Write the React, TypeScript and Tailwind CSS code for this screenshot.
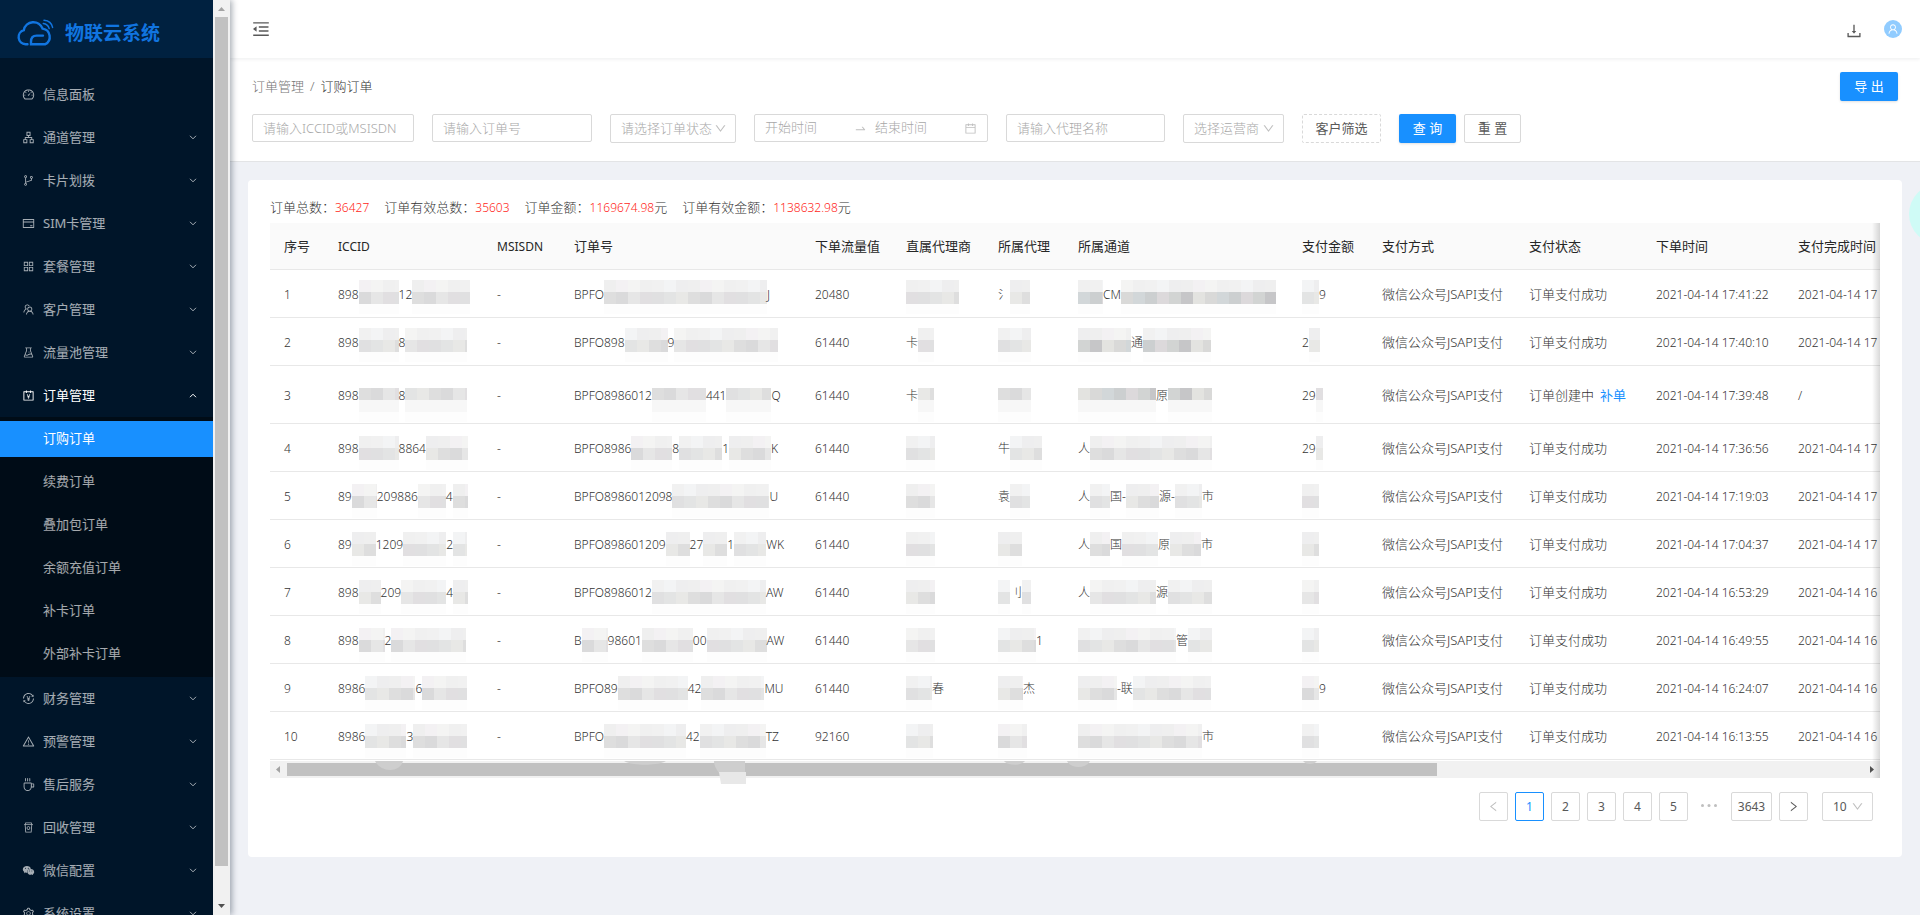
import type { ReactNode } from "react";
import type { IconType } from "react-icons";
import {
  AiFillWechat,
  AiOutlineAccountBook,
  AiOutlineApartment,
  AiOutlineAppstore,
  AiOutlineBranches,
  AiOutlineCalendar,
  AiOutlineCoffee,
  AiOutlineCreditCard,
  AiOutlineDashboard,
  AiOutlineDown,
  AiOutlineDownload,
  AiOutlineExperiment,
  AiOutlineLeft,
  AiOutlineMenuFold,
  AiOutlineRest,
  AiOutlineRight,
  AiOutlineSetting,
  AiOutlineSwapRight,
  AiOutlineTeam,
  AiOutlineTransaction,
  AiOutlineUser,
  AiOutlineWarning,
} from "react-icons/ai";

type MenuEntry = { label: string; icon: IconType; leaf?: boolean; open?: boolean };

const topMenu: MenuEntry[] = [
  { label: "信息面板", icon: AiOutlineDashboard, leaf: true },
  { label: "通道管理", icon: AiOutlineApartment },
  { label: "卡片划拨", icon: AiOutlineBranches },
  { label: "SIM卡管理", icon: AiOutlineCreditCard },
  { label: "套餐管理", icon: AiOutlineAppstore },
  { label: "客户管理", icon: AiOutlineTeam },
  { label: "流量池管理", icon: AiOutlineExperiment },
  { label: "订单管理", icon: AiOutlineAccountBook, open: true },
];

const orderMenu = ["订购订单", "续费订单", "叠加包订单", "余额充值订单", "补卡订单", "外部补卡订单"];

const bottomMenu: MenuEntry[] = [
  { label: "财务管理", icon: AiOutlineTransaction },
  { label: "预警管理", icon: AiOutlineWarning },
  { label: "售后服务", icon: AiOutlineCoffee },
  { label: "回收管理", icon: AiOutlineRest },
  { label: "微信配置", icon: AiFillWechat },
  { label: "系统设置", icon: AiOutlineSetting },
];

// A string is readable text; a number is the width of a masked stretch.
type Fragment = string | number;

type Order = {
  iccid: Fragment[];
  no: Fragment[];
  flow: string;
  direct: Fragment[];
  agent: Fragment[];
  channel: Fragment[];
  amount: Fragment[];
  created: string;
  paid: string;
  pending?: boolean;
};

const orders: Order[] = [
  { iccid: ["898", 40, "12", 58], no: ["BPFO", 163, "J"], flow: "20480", direct: [53], agent: ["氵", 20], channel: [25, "CM", 155], amount: [17, "9"], created: "2021-04-14 17:41:22", paid: "2021-04-14 17" },
  { iccid: ["898", 40, "8", 62], no: ["BPFO898", 43, "9", 104], flow: "61440", direct: ["卡", 16], agent: [33], channel: [53, "通", 68], amount: ["2", 11], created: "2021-04-14 17:40:10", paid: "2021-04-14 17" },
  { iccid: ["898", 40, "8", 62], no: ["BPFO8986012", 54, "441", 45, "Q"], flow: "61440", direct: ["卡", 16], agent: [33], channel: [78, "原", 44], amount: ["29", 7], created: "2021-04-14 17:39:48", paid: "/", pending: true },
  { iccid: ["898", 40, "8864", 42], no: ["BPFO8986", 41, "8", 43, "1", 42, "K"], flow: "61440", direct: [29], agent: ["牛", 32], channel: ["人", 122], amount: ["29", 7], created: "2021-04-14 17:36:56", paid: "2021-04-14 17" },
  { iccid: ["89", 25, "209886", 28, "4", 15], no: ["BPFO8986012098", 97, "U"], flow: "61440", direct: [29], agent: ["袁", 20], channel: ["人", 20, "国-", 33, "源-", 27, "市"], amount: [17], created: "2021-04-14 17:19:03", paid: "2021-04-14 17" },
  { iccid: ["89", 24, "1209", 43, "2", 14], no: ["BPFO898601209", 24, "27", 24, "1", 32, "WK"], flow: "61440", direct: [29], agent: [24], channel: ["人", 20, "国", 36, "原", 31, "市"], amount: [17], created: "2021-04-14 17:04:37", paid: "2021-04-14 17" },
  { iccid: ["898", 22, "209", 45, "4", 15], no: ["BPFO8986012", 114, "AW"], flow: "61440", direct: [29], agent: [12, "刂", 9], channel: ["人", 66, "源", 44], amount: [17], created: "2021-04-14 16:53:29", paid: "2021-04-14 16" },
  { iccid: ["898", 26, "2", 75], no: ["B", 26, "98601", 51, "00", 60, "AW"], flow: "61440", direct: [29], agent: [38, "1"], channel: [98, "管", 24], amount: [17], created: "2021-04-14 16:49:55", paid: "2021-04-14 16" },
  { iccid: ["8986", 50, "6", 45], no: ["BPFO89", 70, "42", 63, "MU"], flow: "61440", direct: [26, "春"], agent: [25, "杰"], channel: [39, "-联", 78], amount: [17, "9"], created: "2021-04-14 16:24:07", paid: "2021-04-14 16" },
  { iccid: ["8986", 41, "3", 54], no: ["BPFO", 82, "42", 66, "TZ"], flow: "92160", direct: [27], agent: [29], channel: [124, "市"], amount: [17], created: "2021-04-14 16:13:55", paid: "2021-04-14 16" },
];

const columns = [
  { title: "序号", width: "w-[54px]" },
  { title: "ICCID", width: "w-[159px]" },
  { title: "MSISDN", width: "w-[77px]" },
  { title: "订单号", width: "w-[241px]" },
  { title: "下单流量值", width: "w-[91px]" },
  { title: "直属代理商", width: "w-[92px]" },
  { title: "所属代理", width: "w-[80px]" },
  { title: "所属通道", width: "w-[224px]" },
  { title: "支付金额", width: "w-[80px]" },
  { title: "支付方式", width: "w-[147px]" },
  { title: "支付状态", width: "w-[127px]" },
  { title: "下单时间", width: "w-[142px]" },
  { title: "支付完成时间", width: "w-[142px]" },
];

const darkTones = ["#e0e0e1", "#e6e6e6", "#dedede", "#e3e4e4", "#e1dfe1", "#dadadb", "#e8e8e6"];
const lightTones = ["#f1f1f1", "#f4f4f3", "#efefef", "#f3f4f5", "#f0f0f0", "#f3f1f3", "#eeeeef"];
const strongTones = ["#cccfd0", "#d9d9d8", "#c6c6c8", "#dcd9db", "#d2d7d9", "#e3e3e0", "#d2d4d3"];

function Mosaic({ width, row, strong }: { width: number; row: number; strong?: boolean }) {
  const dy = row < 2 ? -3 : row === 2 ? 4 : -1;
  const flipped = row === 2;
  const count = Math.ceil(width / 12);
  const dark = strong ? strongTones : darkTones;
  return (
    <svg aria-hidden="true" width={width} height={24} className="shrink-0 overflow-visible">
      <g transform={`translate(0 ${dy})`}>
        {Array.from({ length: count }, (_, i) => {
          const w = Math.min(12, width - i * 12);
          const k = (i * 3 + row * 2 + width) % 7;
          return (
            <g key={i}>
              <rect x={i * 12} y={0} width={w} height={12} fill={flipped ? dark[k] : lightTones[k]} />
              <rect x={i * 12} y={12} width={w} height={12} fill={flipped ? "#f7f7f7" : dark[k]} />
            </g>
          );
        })}
        <rect x={0} y={24} width={width} height={10} fill="#fdfdfd" />
      </g>
    </svg>
  );
}

function Masked({ parts, row, strong }: { parts: Fragment[]; row: number; strong?: boolean }) {
  return (
    <div className="flex h-6 items-center whitespace-nowrap">
      {parts.map((part, i) =>
        typeof part === "string" ? <span key={i}>{part}</span> : <Mosaic key={i} width={part} row={row} strong={strong} />,
      )}
    </div>
  );
}

function Chevron({ up }: { up?: boolean }) {
  return (
    <svg aria-hidden="true" viewBox="0 0 8 5" className="h-[5px] w-2" fill="none" stroke="currentColor">
      <path d={up ? "M1 4.2 4 1.2 7 4.2" : "M1 0.8 4 3.8 7 0.8"} />
    </svg>
  );
}

function MenuRow({ entry }: { entry: MenuEntry }) {
  const Icon = entry.icon;
  return (
    <li>
      <a
        href="#"
        className={`flex h-[43px] items-center pl-[22px] pr-4 text-[13px] ${entry.open ? "text-white" : "text-white/65"}`}
      >
        <Icon className="mr-2 size-[13px]" />
        <span className="flex-1">{entry.label}</span>
        {!entry.leaf && <Chevron up={entry.open} />}
      </a>
    </li>
  );
}

function Logo() {
  return (
    <svg aria-hidden="true" viewBox="0 0 37 28" className="h-7 w-[37px]" fill="none" stroke="#1175e0" strokeLinecap="round">
      <path
        strokeWidth="2.4"
        d="M10.500 25.300H8.500A7.200 7.200 0 0 1 6.800 11.200 9.800 9.800 0 0 1 25.600 9.600 8.300 8.300 0 0 1 28 25.300H14V22.700C14 18.400 16.200 16.600 19.600 16.600H26"
      />
      <path strokeWidth="1.5" d="M26.300 4.600C29.400 5 31.400 6.800 32.200 9.600M27 1.200C31.800 1.600 34.800 4.200 35.600 8.400" />
    </svg>
  );
}

function Sidebar() {
  return (
    <aside className="relative z-10 flex w-[230px] shrink-0 overflow-hidden font-normal shadow-[2px_0_6px_rgba(0,21,41,0.35)]">
      <div className="min-w-0 flex-1 bg-[#001529]">
        <a href="#" className="flex h-[58px] items-center bg-[#002140] pt-2 pl-[17px]">
          <Logo />
          <span className="ml-[11px] text-[19px] leading-6 font-bold text-[#1175e0]">物联云系统</span>
        </a>
        <nav className="pt-[15px]">
          <ul>
            {topMenu.map((m) => (
              <MenuRow key={m.label} entry={m} />
            ))}
          </ul>
          <ul className="bg-[#000c17] py-px">
            {orderMenu.map((label, i) => (
              <li key={label} className="pt-[3px] pb-1">
                <a
                  href="#"
                  className={`flex h-9 items-center pl-[43px] text-[13px] ${i === 0 ? "bg-[#1890ff] text-white" : "text-white/65"}`}
                >
                  {label}
                </a>
              </li>
            ))}
          </ul>
          <ul>
            {bottomMenu.map((m) => (
              <MenuRow key={m.label} entry={m} />
            ))}
          </ul>
        </nav>
      </div>
      <div aria-hidden="true" className="flex w-[17px] flex-col items-center bg-[#f1f1f1]">
        <svg viewBox="0 0 17 17" className="size-[17px] shrink-0">
          <path d="M5 11h7L8.500 7z" fill="#a3a3a3" />
        </svg>
        <div className="w-[13px] flex-1 bg-[#c1c1c1]" />
        <div className="h-8 shrink-0" />
        <svg viewBox="0 0 17 17" className="size-[17px] shrink-0">
          <path d="M5 6h7l-3.500 4z" fill="#505050" />
        </svg>
      </div>
    </aside>
  );
}

function TextField({ label, className }: { label: string; className: string }) {
  return (
    <input
      type="text"
      aria-label={label}
      placeholder={label}
      className={`h-7 rounded-[2px] border border-[#d9d9d9] bg-white px-[10px] text-[13px] outline-none placeholder:text-[#a8a8a8] ${className}`}
    />
  );
}

function SelectField({ label, text, className, children }: { label: string; text: string; className: string; children?: ReactNode }) {
  return (
    <div className={`relative flex h-[29px] items-center rounded-[2px] border border-[#d9d9d9] bg-white ${className}`}>
      <select aria-label={label} className="h-full w-full appearance-none bg-transparent pl-[10px] outline-none">
        <option>{text}</option>
        {children}
      </select>
      <AiOutlineDown className="pointer-events-none absolute right-2 size-[13px] text-[#bfbfbf]" />
    </div>
  );
}

function Filters() {
  return (
    <form className="flex items-start gap-[18px]" onSubmit={(e) => e.preventDefault()}>
      <TextField label="请输入ICCID或MSISDN" className="w-[162px]" />
      <TextField label="请输入订单号" className="w-[160px]" />
      <SelectField label="订单状态" text="请选择订单状态" className="w-[126px] text-[13px] text-[#a8a8a8]" />
      <div className="flex h-7 w-[234px] items-center rounded-[2px] border border-[#d9d9d9] px-[10px] text-[13px] text-[#bfbfbf]">
        <input aria-label="开始时间" placeholder="开始时间" className="min-w-0 flex-1 outline-none placeholder:text-[#a8a8a8]" />
        <AiOutlineSwapRight className="mr-2 size-[13px]" />
        <input aria-label="结束时间" placeholder="结束时间" className="min-w-0 flex-1 outline-none placeholder:text-[#a8a8a8]" />
        <AiOutlineCalendar className="size-[13px]" />
      </div>
      <TextField label="请输入代理名称" className="w-[159px]" />
      <SelectField label="运营商" text="选择运营商" className="w-[101px] text-[13px] text-[#a8a8a8]" />
      <button type="button" className="h-[29px] w-[79px] rounded-[2px] border border-dashed border-[#d9d9d9] bg-white text-[13px] font-normal text-[#595959]">
        客户筛选
      </button>
      <div className="flex gap-2">
        <button type="submit" className="h-[29px] w-[57px] rounded-[2px] bg-[#1890ff] text-[13px] font-normal text-white shadow-sm">
          查 询
        </button>
        <button type="reset" className="h-[29px] w-[57px] rounded-[2px] border border-[#d9d9d9] bg-white text-[13px] font-normal text-[#595959]">
          重 置
        </button>
      </div>
    </form>
  );
}

const stats = [
  { label: "订单总数：", value: "36427", unit: "" },
  { label: "订单有效总数：", value: "35603", unit: "" },
  { label: "订单金额：", value: "1169674.98", unit: "元" },
  { label: "订单有效金额：", value: "1138632.98", unit: "元" },
];

function OrderTable() {
  const cell = "border-b border-[#e8e8e8] px-[14px] pt-[2px] whitespace-nowrap";
  return (
    <div className="relative">
      <div className="overflow-hidden">
        <table className="w-[1656px] table-fixed border-separate border-spacing-0 text-left text-xs text-[#333333]">
          <thead>
            <tr className="h-[47px] bg-[#fafafa] text-[#262626]">
              {columns.map((c) => (
                <th key={c.title} scope="col" className={`${cell} ${c.width} ${/^[A-Z]/.test(c.title) ? "text-xs" : "text-[13px]"} font-normal`}>
                  {c.title}
                </th>
              ))}
            </tr>
          </thead>
          <tbody>
            {orders.map((o, i) => (
              <tr key={o.created} className={o.pending ? "h-[58px]" : "h-12"}>
                <td className={cell}>{i + 1}</td>
                <td className={cell}><Masked parts={o.iccid} row={i} /></td>
                <td className={cell}>-</td>
                <td className={cell}><Masked parts={o.no} row={i} /></td>
                <td className={cell}>{o.flow}</td>
                <td className={cell}><Masked parts={o.direct} row={i} /></td>
                <td className={cell}><Masked parts={o.agent} row={i} /></td>
                <td className={cell}><Masked parts={o.channel} row={i} strong={i < 3} /></td>
                <td className={cell}><Masked parts={o.amount} row={i} /></td>
                <td className={`${cell} text-[13px]`}>微信公众号JSAPI支付</td>
                <td className={`${cell} text-[13px]`}>
                  {o.pending ? (
                    <div className="flex gap-[6px]">
                      <span>订单创建中</span>
                      <a href="#" className="font-normal text-[#1890ff]">补单</a>
                    </div>
                  ) : (
                    "订单支付成功"
                  )}
                </td>
                <td className={cell}>{o.created}</td>
                <td className={cell}>{o.paid}</td>
              </tr>
            ))}
          </tbody>
        </table>
      </div>
      <div aria-hidden="true" className="relative mt-px flex h-[17px] items-center bg-[#f1f1f1]">
        <svg viewBox="0 0 17 17" className="size-[17px] shrink-0">
          <path d="M10 5v7L6 8.500z" fill="#a3a3a3" />
        </svg>
        <div className="flex flex-1">
          <div className="h-[13px] w-[73%] bg-[#c1c1c1]" />
        </div>
        <svg viewBox="0 0 17 17" className="size-[17px] shrink-0">
          <path d="M7 5v7l4-3.500z" fill="#505050" />
        </svg>
        <svg viewBox="0 0 1060 24" className="absolute top-0 left-0 h-6 w-[1060px]" fill="#cecece">
          <path d="M105 0h28c-3 12-22 12-28 0zM354 0h42c-8 5-34 5-42 0zM734 0h21c-4 5-17 5-21 0zM797 0h23c-4 8-19 8-23 0zM1033 0h14c-3 4-11 4-14 0z" />
          <path d="M444 0h31v12h-26c-3-4-5-8-5-12z" />
          <path fill="#e8e8e8" d="M449 11h27v12h-25z" />
        </svg>
      </div>
      <div aria-hidden="true" className="pointer-events-none absolute inset-y-0 right-0 w-2 bg-linear-to-l from-black/15 to-transparent" />
    </div>
  );
}

function Pagination() {
  const box = "flex h-[29px] items-center justify-center rounded-[2px] border bg-white";
  return (
    <nav aria-label="分页" className="mt-[14px] flex items-center justify-end gap-[7px] pr-[7px] text-xs font-normal text-[#595959]">
      <button type="button" aria-label="上一页" disabled className={`${box} w-[29px] border-[#d9d9d9] text-[#bfbfbf]`}>
        <AiOutlineLeft className="size-[13px]" />
      </button>
      {[1, 2, 3, 4, 5].map((n) => (
        <button
          key={n}
          type="button"
          className={`${box} w-[29px] ${n === 1 ? "border-[#1890ff] text-[#1890ff]" : "border-[#d9d9d9]"}`}
        >
          {n}
        </button>
      ))}
      <svg aria-hidden="true" viewBox="0 0 29 29" className="size-[29px]" fill="#bfbfbf">
        <circle cx="7.500" cy="13.500" r="1.500" />
        <circle cx="14" cy="13.500" r="1.500" />
        <circle cx="20.500" cy="13.500" r="1.500" />
      </svg>
      <button type="button" className={`${box} w-[41px] border-[#d9d9d9]`}>3643</button>
      <button type="button" aria-label="下一页" className={`${box} w-[29px] border-[#d9d9d9]`}>
        <AiOutlineRight className="size-[13px]" />
      </button>
      <SelectField label="每页条数" text="10" className="ml-[7px] w-[51px]" />
    </nav>
  );
}

export default function App() {
  return (
    <div className="flex h-screen overflow-hidden bg-[#f0f2f5] font-['Noto_Sans','Noto_Sans_CJK_SC',sans-serif] font-light text-[#333333]">
      <Sidebar />
      <div className="relative flex min-w-0 flex-1 flex-col overflow-hidden bg-[#eff1f6]">
        <header className="relative flex h-[58px] shrink-0 items-center bg-white pr-[18px] pl-[21px] text-[#595959] shadow-[0_1px_4px_rgba(0,21,41,0.08)]">
          <button type="button" aria-label="收起菜单">
            <AiOutlineMenuFold className="size-5" />
          </button>
          <button type="button" aria-label="下载" className="mt-1 ml-auto">
            <AiOutlineDownload className="size-[18px]" />
          </button>
          <button type="button" aria-label="用户" className="ml-[21px] flex size-[18px] items-center justify-center rounded-full bg-[#91ccff] text-white">
            <AiOutlineUser className="size-3" />
          </button>
        </header>
        <section className="shrink-0 border-b border-[#e3e4e6] bg-white pt-[14px] pr-[22px] pb-[18px] pl-[22px]">
          <div className="mb-[13px] flex items-center justify-between">
            <nav aria-label="面包屑" className="flex gap-[6px] text-[13px]">
              <a href="#" className="text-[#757575]">订单管理</a>
              <span className="text-[#757575]">/</span>
              <span>订购订单</span>
            </nav>
            <button type="button" className="h-[29px] w-[58px] rounded-[2px] bg-[#1890ff] text-[13px] font-normal text-white shadow-sm">
              导 出
            </button>
          </div>
          <Filters />
        </section>
        <main className="mx-[18px] mt-[18px] rounded bg-white px-[22px] pt-[18px] pb-9">
          <div className="mb-[5px] flex h-5 items-center gap-[15px] text-[13px]">
            {stats.map((s) => (
              <p key={s.label}>
                {s.label}
                <span className="text-xs text-[#ff1f22]">{s.value}</span>
                {s.unit}
              </p>
            ))}
          </div>
          <OrderTable />
          <Pagination />
        </main>
        <div aria-hidden="true" className="absolute top-[184px] -right-[49px] size-[60px] rounded-full bg-[#cffbf6]" />
      </div>
    </div>
  );
}
